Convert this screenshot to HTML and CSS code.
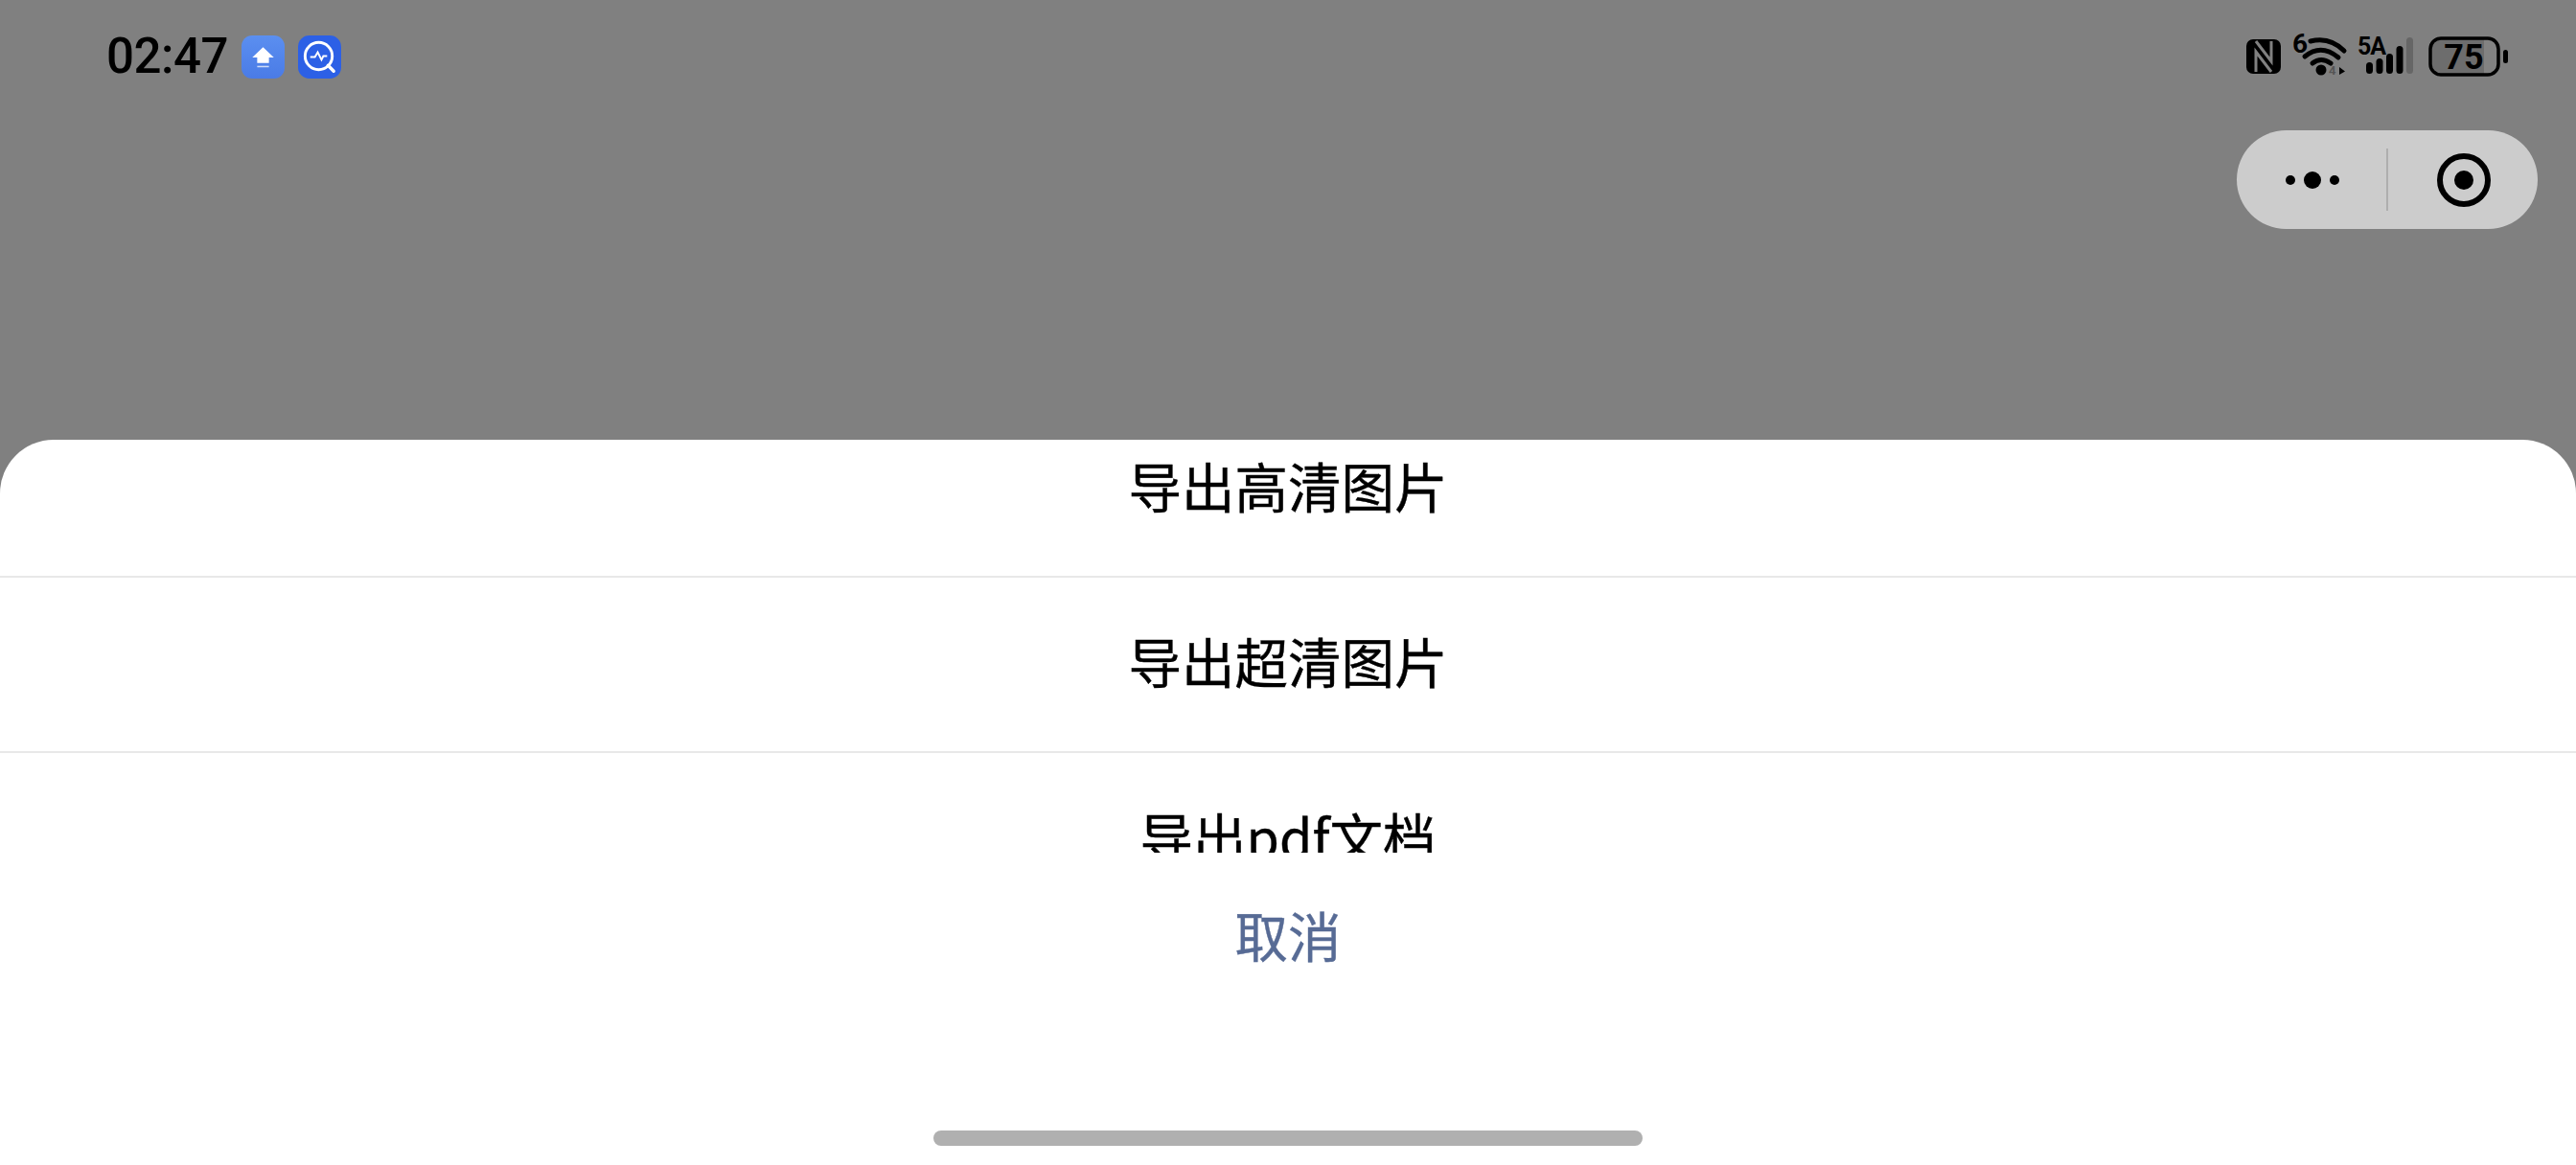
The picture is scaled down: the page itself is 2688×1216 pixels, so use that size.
FILE: index.html
```html
<!DOCTYPE html>
<html lang="zh-CN">
<head>
<meta charset="utf-8">
<title>导出</title>
<link rel="stylesheet" href="styles.css">
</head>
<body>
<div class="page">
  <header class="top">
    <div class="status">
      <div class="status-left">
        <span class="time">02:47</span>
        <svg class="app" viewBox="0 0 44 44">
          <defs><linearGradient id="g1" x1="0" y1="0" x2="0" y2="1"><stop offset="0" stop-color="#5b8ff0"/><stop offset="1" stop-color="#4a7be6"/></linearGradient></defs>
          <rect width="44" height="44" rx="11" fill="url(#g1)"/>
          <path d="M22 12 L33 22.500 H28 V28 H16 V22.500 H11 Z" fill="#fff"/>
          <rect x="16" y="31" width="12" height="1.500" fill="#cfdcf8"/>
        </svg>
        <svg class="app" viewBox="0 0 46 46">
          <rect width="46" height="46" rx="12" fill="#2c60e6"/>
          <circle cx="22" cy="22" r="14.500" fill="none" stroke="#fff" stroke-width="3"/>
          <path d="M32 32 L38 38" stroke="#fff" stroke-width="3.500" stroke-linecap="round"/>
          <path d="M13 23 H18 L21 18 L25 26 L27 22 H31" fill="none" stroke="#fff" stroke-width="2"/>
        </svg>
      </div>
      <div class="status-right">
        <svg class="nfc" viewBox="0 0 36 36">
          <rect width="36" height="36" rx="7" fill="#000"/>
          <path d="M10 2 L26 23 V2 M10 34 V13 L26 34" fill="none" stroke="#808080" stroke-width="3"/>
        </svg>
        <svg class="wifi" viewBox="0 0 60 45">
          <text class="mini" x="1" y="20" font-size="28">6</text>
          <path d="M20 8 Q40 3 55 18 M14 24 Q31 10 49 25 M22 31 Q31 24 41 31" fill="none" stroke="#000" stroke-width="5" stroke-linecap="round"/>
          <circle cx="31" cy="38" r="5.500" fill="#000"/>
          <text class="mini faint" x="39" y="43" font-size="13">4</text>
          <path d="M50 35 L56 39.500 L50 43 Z" fill="#000"/>
        </svg>
        <svg class="signal" viewBox="0 0 60 42">
          <text class="mini narrow" x="1" y="20" font-size="25">5A</text>
          <rect x="10" y="28" width="7" height="12" rx="3.500" fill="#000"/>
          <rect x="20.500" y="24" width="7" height="16" rx="3.500" fill="#000"/>
          <rect x="31" y="19" width="7" height="21" rx="3.500" fill="#000"/>
          <rect x="41.500" y="11" width="7" height="29" rx="3.500" fill="#000"/>
          <rect x="52" y="2" width="7" height="38" rx="3.500" fill="#666"/>
        </svg>
        <svg class="battery" viewBox="0 0 84 44">
          <rect x="2" y="3" width="69" height="38" rx="11" fill="#6d6d6d"/>
          <rect x="58" y="3" width="13" height="38" fill="#828282"/>
          <rect x="2" y="3" width="71" height="38" rx="11" fill="none" stroke="#000" stroke-width="3.500"/>
          <text class="level" x="37" y="35" font-size="36" text-anchor="middle">75</text>
          <rect x="78" y="15" width="5" height="14" rx="2.500" fill="#000"/>
        </svg>
      </div>
    </div>
    <div class="capsule-row">
      <div class="capsule">
        <div class="capsule-part capsule-left">
          <svg class="capsule-more" viewBox="0 0 56 18">
            <circle cx="5" cy="9" r="5" fill="#000"/>
            <circle cx="28" cy="9" r="9" fill="#000"/>
            <circle cx="51" cy="9" r="5" fill="#000"/>
          </svg>
        </div>
        <div class="capsule-line"></div>
        <div class="capsule-part capsule-right">
          <svg class="capsule-close" viewBox="0 0 56 56">
            <circle cx="28" cy="28" r="25" fill="none" stroke="#000" stroke-width="6"/>
            <circle cx="28" cy="28" r="10" fill="#000"/>
          </svg>
        </div>
      </div>
    </div>
  </header>
  <section class="sheet">
    <div class="list">
      <div class="list-inner">
        <div class="row">导出高清图片</div>
        <div class="row">导出超清图片</div>
        <div class="row">导出pdf文档</div>
      </div>
    </div>
    <div class="cancel">取消</div>
    <div class="home-bar"></div>
  </section>
</div>
</body>
</html>
```
FILE: styles.css
```css
* { box-sizing: border-box; }
html, body { margin: 0; padding: 0; }
body { background: #808080; font-family: "Noto Sans CJK SC", "Noto Sans", sans-serif; }
.page { width: 2688px; height: 1216px; display: flex; flex-direction: column; overflow: hidden; }
.top { height: 459px; flex: none; background: #808080; }
.status { height: 118px; display: flex; justify-content: space-between; align-items: center; padding: 0 70px 0 111px; }
.status-left { display: flex; align-items: center; gap: 14px; }
.time { font-family: Roboto, sans-serif; font-weight: 500; font-size: 51px; letter-spacing: -0.5px; line-height: 58px; color: #000; }
.app { width: 45px; height: 45px; display: block; }
.status-right { display: flex; align-items: center; }
.status-right svg { display: block; overflow: visible; }
.nfc { width: 36px; height: 36px; margin-right: 11px; }
.wifi { width: 60px; height: 45px; margin-right: 8px; margin-top: -4px; }
.signal { width: 60px; height: 42px; margin-right: 15px; margin-top: -2px; }
.battery { width: 84px; height: 44px; }
.mini { font-family: Roboto, sans-serif; font-weight: 700; fill: #000; }
.narrow { letter-spacing: -1px; }
.faint { fill: #555; }
.level { font-family: Roboto, sans-serif; font-weight: 700; fill: #000; }
.capsule-row { display: flex; justify-content: flex-end; padding: 18px 40px 0 0; }
.capsule { width: 314px; height: 103px; border-radius: 52px; background: #cccccc; display: flex; align-items: center; }
.capsule-part { flex: 1; display: flex; align-items: center; justify-content: center; }
.capsule-left { padding-left: 2px; }
.capsule-right { padding-left: 2px; }
.capsule-line { width: 2px; height: 65px; background: #aeaeae; }
.capsule-more { width: 56px; height: 18px; display: block; }
.capsule-close { width: 56px; height: 56px; display: block; }
.sheet { flex: 1; background: #fff; border-radius: 56px 56px 0 0; display: flex; flex-direction: column; overflow: hidden; }
.list { height: 431px; flex: none; overflow: hidden; }
.list-inner { margin-top: -39px; }
.row { height: 183px; padding-bottom: 10px; display: flex; align-items: center; justify-content: center; font-size: 55.5px; color: #000; border-bottom: 2px solid #e8e8e8; -webkit-text-stroke: 0.4px #000; }
.cancel { height: 176px; flex: none; padding-bottom: 6px; display: flex; align-items: center; justify-content: center; font-size: 55.5px; color: #576b95; -webkit-text-stroke: 0.4px #576b95; }
.home-bar { width: 740px; height: 16px; border-radius: 8px; background: #b0b0b0; margin: auto auto 20px; }
```
